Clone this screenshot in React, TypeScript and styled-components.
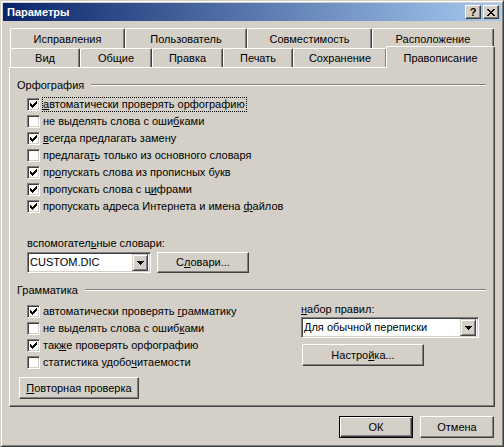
import React from "react";
import styled, { createGlobalStyle } from "styled-components";

const GlobalStyle = createGlobalStyle`
  html, body {
    margin: 0;
    padding: 0;
    background: #d4d0c8;
  }
  body {
    font-family: "Liberation Sans", Arial, sans-serif;
    font-size: 11px;
    line-height: 13px;
    color: #000;
  }
`;

const Window = styled.div`
  width: 504px;
  height: 447px;
  box-sizing: border-box;
  background: #d4d0c8;
  border: 1px solid;
  border-color: #d4d0c8 #404040 #404040 #d4d0c8;
  box-shadow: inset 1px 1px #fff, inset -1px -1px #808080;
  padding: 2px;
  display: flex;
  flex-direction: column;
`;

const Caption = styled.div`
  height: 18px;
  flex: none;
  display: flex;
  align-items: center;
  padding: 0 2px;
  background: linear-gradient(to right, #0a246a, #a6caf0);
`;

const CaptionTitle = styled.span`
  flex: 1;
  color: #fff;
  font-weight: bold;
  font-size: 11px;
  padding-left: 2px;
`;

const CaptionButton = styled.div<{ $gap?: number }>`
  width: 16px;
  height: 14px;
  box-sizing: border-box;
  margin-left: ${(p) => p.$gap ?? 0}px;
  background: #d4d0c8;
  border: 1px solid;
  border-color: #fff #404040 #404040 #fff;
  box-shadow: inset -1px -1px #808080;
  display: flex;
  align-items: center;
  justify-content: center;
  font-weight: bold;
  font-size: 11px;
  line-height: 11px;
`;

const Body = styled.div`
  flex: 1;
  display: flex;
  flex-direction: column;
  padding: 7px 6px 6px 6px;
`;

const TabRow = styled.div<{ $h: number }>`
  display: flex;
  align-items: flex-end;
  height: ${(p) => p.$h}px;
  padding-left: 1px;
`;

const Tab = styled.div<{ $w: number; $active?: boolean; $h: number }>`
  flex: none;
  width: ${(p) => p.$w}px;
  height: ${(p) => (p.$active ? p.$h + 3 : p.$h)}px;
  margin-left: ${(p) => (p.$active ? -1 : 0)}px;
  margin-bottom: ${(p) => (p.$active ? -1 : 0)}px;
  position: ${(p) => (p.$active ? "relative" : "static")};
  z-index: ${(p) => (p.$active ? 1 : 0)};
  box-sizing: border-box;
  background: #d4d0c8;
  border-top: 1px solid #fff;
  border-left: 1px solid #fff;
  border-right: 1px solid #404040;
  box-shadow: inset -1px 0 #808080;
  border-top-left-radius: 2px;
  border-top-right-radius: 2px;
  display: flex;
  align-items: center;
  justify-content: center;
  padding-top: 1px;
  white-space: nowrap;
`;

const Panel = styled.div`
  height: 340px;
  box-sizing: border-box;
  border: 1px solid;
  border-color: #fff #404040 #404040 #fff;
  box-shadow: inset -1px -1px #808080;
  padding: 10px 8px 0 7px;
  display: flex;
  flex-direction: column;
`;

const GroupHeader = styled.div<{ $top?: number }>`
  display: flex;
  align-items: center;
  gap: 7px;
  height: 14px;
  margin-top: ${(p) => p.$top ?? 0}px;
`;

const GroupLine = styled.div`
  flex: 1;
  height: 0;
  border-top: 1px solid #808080;
  border-bottom: 1px solid #fff;
`;

const CheckList = styled.div<{ $top: number }>`
  display: flex;
  flex-direction: column;
  margin-top: ${(p) => p.$top}px;
  padding-left: 10px;
`;

const CheckRow = styled.div`
  height: 17px;
  display: flex;
  align-items: center;
  gap: 2px;
`;

const Box = styled.div`
  width: 13px;
  height: 13px;
  flex: none;
  box-sizing: border-box;
  background: #fff;
  border: 1px solid;
  border-color: #808080 #fff #fff #808080;
  box-shadow: inset 1px 1px #404040, inset -1px -1px #d4d0c8;
  display: flex;
  align-items: center;
  justify-content: center;
`;

const Label = styled.span<{ $focus?: boolean }>`
  border: 1px ${(p) => (p.$focus ? "dotted #000" : "solid transparent")};
  padding-right: 1px;
  white-space: nowrap;
`;

const FieldLabel = styled.div<{ $top: number; $left: number }>`
  margin-top: ${(p) => p.$top}px;
  padding-left: ${(p) => p.$left}px;
  height: 13px;
  white-space: nowrap;
`;

const DictRow = styled.div`
  display: flex;
  gap: 6px;
  margin-top: 2px;
  padding-left: 10px;
`;

const Combo = styled.div<{ $w: number }>`
  width: ${(p) => p.$w}px;
  height: 21px;
  box-sizing: border-box;
  background: #fff;
  border: 1px solid;
  border-color: #808080 #fff #fff #808080;
  box-shadow: inset 1px 1px #404040, inset -1px -1px #d4d0c8;
  padding: 2px;
  display: flex;
  align-items: center;
`;

const ComboText = styled.span`
  flex: 1;
  padding-left: 0px;
  white-space: nowrap;
`;

const ComboArrow = styled.div`
  width: 16px;
  height: 17px;
  box-sizing: border-box;
  background: #d4d0c8;
  border: 1px solid;
  border-color: #d4d0c8 #404040 #404040 #d4d0c8;
  box-shadow: inset 1px 1px #fff, inset -1px -1px #808080;
  display: flex;
  align-items: center;
  justify-content: center;
`;

const Button = styled.div<{ $w: number; $h?: number; $left?: number; $default?: boolean }>`
  width: ${(p) => p.$w}px;
  height: ${(p) => p.$h ?? 22}px;
  margin-left: ${(p) => p.$left ?? 0}px;
  box-sizing: border-box;
  background: #d4d0c8;
  display: flex;
  align-items: center;
  justify-content: center;
  white-space: nowrap;
  border: 1px solid;
  border-color: ${(p) => (p.$default ? "#000" : "#fff #404040 #404040 #fff")};
  box-shadow: ${(p) =>
    p.$default
      ? "inset 1px 1px #fff, inset -1px -1px #404040, inset -2px -2px #808080"
      : "inset -1px -1px #808080"};
`;

const GrammarBody = styled.div`
  display: flex;
  margin-top: 6px;
`;

const GrammarChecks = styled.div`
  flex: 1;
  display: flex;
  flex-direction: column;
  padding-left: 10px;
`;

const RuleColumn = styled.div`
  width: 178px;
  margin-right: 7px;
  display: flex;
  flex-direction: column;
`;

const RuleCombo = styled(Combo)`
  margin-top: 1px;
`;

const RuleButtonWrap = styled.div`
  margin-top: 6px;
`;

const RecheckWrap = styled.div`
  margin-top: 6px;
`;

const Footer = styled.div`
  display: flex;
  justify-content: flex-end;
  gap: 7px;
  margin-top: 9px;
  padding-right: 1px;
`;

function Check() {
  return (
    <svg width="7" height="7" viewBox="0 0 7 7" shapeRendering="crispEdges">
      <rect x="6" y="0" width="1" height="1" />
      <rect x="5" y="1" width="2" height="1" />
      <rect x="0" y="2" width="1" height="1" />
      <rect x="4" y="2" width="3" height="1" />
      <rect x="0" y="3" width="2" height="1" />
      <rect x="3" y="3" width="3" height="1" />
      <rect x="0" y="4" width="5" height="1" />
      <rect x="1" y="5" width="3" height="1" />
      <rect x="2" y="6" width="1" height="1" />
    </svg>
  );
}

function Arrow() {
  return (
    <svg width="7" height="4" viewBox="0 0 7 4" shapeRendering="crispEdges">
      <path d="M0 0h7v1H0zM1 1h5v1H1zM2 2h3v1H2zM3 3h1v1H3z" />
    </svg>
  );
}

function CloseGlyph() {
  return (
    <svg width="8" height="7" viewBox="0 0 8 7" shapeRendering="crispEdges">
      <path d="M0 0h2v1H0zM6 0h2v1H6zM1 1h2v1H1zM5 1h2v1H5zM2 2h4v1H2zM3 3h2v1H3zM2 4h4v1H2zM1 5h2v1H1zM5 5h2v1H5zM0 6h2v1H0zM6 6h2v1H6z" />
    </svg>
  );
}

// text with one underlined access key
function Key({ text, at }: { text: string; at: number }) {
  if (at < 0) return <>{text}</>;
  return (
    <>
      {text.slice(0, at)}
      <u>{text[at]}</u>
      {text.slice(at + 1)}
    </>
  );
}

type Item = { text: string; key: number; checked: boolean; focus?: boolean };

const spelling: Item[] = [
  { text: "автоматически проверять орфографию", key: 0, checked: true, focus: true },
  { text: "не выделять слова с ошибками", key: 23, checked: false },
  { text: "всегда предлагать замену", key: 0, checked: true },
  { text: "предлагать только из основного словаря", key: 8, checked: false },
  { text: "пропускать слова из прописных букв", key: 2, checked: true },
  { text: "пропускать слова с цифрами", key: 20, checked: true },
  { text: "пропускать адреса Интернета и имена файлов", key: 36, checked: true },
];

const grammar: Item[] = [
  { text: "автоматически проверять грамматику", key: 24, checked: true },
  { text: "не выделять слова с ошибками", key: 24, checked: false },
  { text: "также проверять орфографию", key: 3, checked: true },
  { text: "статистика удобочитаемости", key: 16, checked: false },
];

function CheckItem({ item }: { item: Item }) {
  return (
    <CheckRow>
      <Box>{item.checked && <Check />}</Box>
      <Label $focus={item.focus}>
        <Key text={item.text} at={item.key} />
      </Label>
    </CheckRow>
  );
}

const backTabs = [
  { t: "Исправления", w: 115 },
  { t: "Пользователь", w: 122 },
  { t: "Совместимость", w: 125 },
  { t: "Расположение", w: 122 },
];

const frontTabs = [
  { t: "Вид", w: 70 },
  { t: "Общие", w: 72 },
  { t: "Правка", w: 71 },
  { t: "Печать", w: 70 },
  { t: "Сохранение", w: 94 },
  { t: "Правописание", w: 109, active: true },
];

export default function App() {
  return (
    <>
      <GlobalStyle />
      <Window>
        <Caption>
          <CaptionTitle>Параметры</CaptionTitle>
          <CaptionButton>?</CaptionButton>
          <CaptionButton $gap={2}>
            <CloseGlyph />
          </CaptionButton>
        </Caption>
        <Body>
          <TabRow $h={20}>
            {backTabs.map((t) => (
              <Tab key={t.t} $w={t.w} $h={20}>
                {t.t}
              </Tab>
            ))}
          </TabRow>
          <TabRow $h={19}>
            {frontTabs.map((t) => (
              <Tab key={t.t} $w={t.w} $h={19} $active={t.active}>
                {t.t}
              </Tab>
            ))}
          </TabRow>
          <Panel>
            <GroupHeader>
              Орфография
              <GroupLine />
            </GroupHeader>
            <CheckList $top={4}>
              {spelling.map((i) => (
                <CheckItem key={i.text} item={i} />
              ))}
            </CheckList>
            <FieldLabel $top={22} $left={10}>
              <Key text="вспомогательные словари:" at={11} />
            </FieldLabel>
            <DictRow>
              <Combo $w={124}>
                <ComboText>CUSTOM.DIC</ComboText>
                <ComboArrow>
                  <Arrow />
                </ComboArrow>
              </Combo>
              <Button $w={92} $h={21}>
                <Key text="Словари..." at={1} />
              </Button>
            </DictRow>
            <GroupHeader $top={10}>
              Грамматика
              <GroupLine />
            </GroupHeader>
            <GrammarBody>
              <GrammarChecks>
                {grammar.map((i) => (
                  <CheckItem key={i.text} item={i} />
                ))}
              </GrammarChecks>
              <RuleColumn>
                <FieldLabel $top={0} $left={0}>
                  <Key text="набор правил:" at={0} />
                </FieldLabel>
                <RuleCombo $w={178}>
                  <ComboText>Для обычной переписки</ComboText>
                  <ComboArrow>
                    <Arrow />
                  </ComboArrow>
                </RuleCombo>
                <RuleButtonWrap>
                  <Button $w={122} $left={1}>
                    <Key text="Настройка..." at={6} />
                  </Button>
                </RuleButtonWrap>
              </RuleColumn>
            </GrammarBody>
            <RecheckWrap>
              <Button $w={120} $left={2}>
                <Key text="Повторная проверка" at={0} />
              </Button>
            </RecheckWrap>
          </Panel>
          <Footer>
            <Button $w={74} $default>
              ОК
            </Button>
            <Button $w={74}>Отмена</Button>
          </Footer>
        </Body>
      </Window>
    </>
  );
}
